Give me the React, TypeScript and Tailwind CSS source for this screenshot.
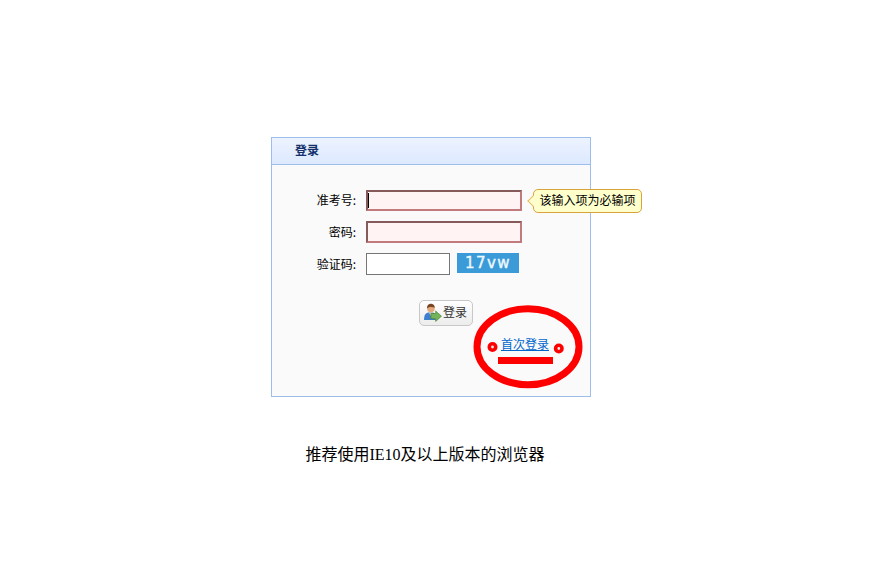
import React from "react";

const inputError =
  "w-[156px] border-2 border-t-[#865a5a] border-l-[#865a5a] border-r-[#c07c7c] border-b-[#c07c7c] bg-[#fff3f3] outline-none";

const LoginIcon = () => (
  <svg width="19" height="19" viewBox="0 0 18 18">
    <path d="M1 16c0-5 1.500-7 5-7h3c2 0 3 2 3 7z" fill="#3f7fd0" />
    <path d="M5.500 9l2 3.500L9.500 9z" fill="#d8c8b0" />
    <circle cx="7.500" cy="5.200" r="3.600" fill="#e3a97c" />
    <path d="M3.800 5c0-3.200 2-4.300 3.800-4.300S11.200 2 11.200 4.500C9 3.500 6 3.500 3.800 5z" fill="#7a4520" />
    <path d="M7.500 10h4.500V7.500l5.500 5-5.500 5V15H7.500z" fill="#74b35a" stroke="#3f7f2a" strokeWidth="0.600" />
  </svg>
);

export default function App() {
  return (
    <div className="min-h-[581px] bg-white pl-[271px] pt-[137px] font-['Noto_Sans_CJK_SC',sans-serif] text-xs text-black">
      <div className="relative h-[260px] w-[320px] border border-[#9dbdeb] bg-[#fafafa]">
        <div className="flex h-[27px] items-center border-b border-[#9dbdeb] bg-gradient-to-b from-[#edf3ff] to-[#dde9ff] pb-[3px] pl-[23px] text-xs font-bold text-[#15316b]">
          登录
        </div>

        <div className="flex flex-col gap-[10px] pt-[25px]">
          <div className="relative flex items-center">
            <label className="w-[84px] pb-[2px] text-right">准考号:</label>
            <input className={`ml-[10px] h-[21px] ${inputError}`} />
            <span className="absolute left-[96px] top-[3px] h-[15px] w-px bg-black" />
          </div>
          <div className="flex items-center">
            <label className="w-[84px] text-right">密码:</label>
            <input type="password" className={`ml-[10px] h-[22px] ${inputError}`} />
          </div>
          <div className="flex items-start">
            <label className="w-[84px] text-right leading-[22px]">验证码:</label>
            <input className="ml-[10px] h-[22px] w-[84px] border border-[#767676] bg-white outline-none" />
            <div className="ml-[7px] flex h-[20px] w-[62px] items-center justify-center bg-[#3a9bd8] pt-[1px] font-['DejaVu_Sans',sans-serif] text-[15px] tracking-[1.500px] text-[#eef8ff] [-webkit-text-stroke:0.4px_#eef8ff]">
              17vw
            </div>
          </div>
        </div>

        <div className="mt-[25px] flex justify-end pr-[117px]">
          <button className="flex h-[26px] w-[54px] items-center gap-[1px] rounded-[5px] border border-[#c8c8c8] bg-gradient-to-b from-white to-[#ececec] pl-[3px] pb-[2px] text-[#333]">
            <LoginIcon />
            登录
          </button>
        </div>

        <div className="mt-[9px] pl-[229px] leading-[18px]">
          <a href="#" className="text-[#0066cc] underline">
            首次登录
          </a>
        </div>

        {/* validation tooltip */}
        <div className="absolute left-[261px] top-[51px] flex h-[24px] w-[109px] items-center justify-center rounded-[5px] border border-[#d9a33c] bg-[#ffffcc] pb-[2px]">
          <span className="absolute left-[-5px] top-[7px] h-[8px] w-[8px] rotate-45 border-b border-l border-[#e5bd6e] bg-[#ffffcc]" />
          <span className="relative">该输入项为必输项</span>
        </div>

        {/* hand-drawn red annotation */}
        <svg className="absolute left-[200px] top-[166px]" width="114" height="88" viewBox="0 0 114 88" fill="none">
          <ellipse cx="56" cy="42.700" rx="51" ry="38" stroke="#ff0000" strokeWidth="7" />
          <circle cx="20.500" cy="43" r="3.200" stroke="#ff0000" strokeWidth="3.600" fill="#ffe8e8" />
          <circle cx="86.800" cy="44.500" r="3.200" stroke="#ff0000" strokeWidth="3.600" fill="#ffe8e8" />
          <rect x="26" y="53" width="55" height="7" fill="#ff0000" />
        </svg>
      </div>

      <p className="mt-[48px] w-[308px] text-center font-['Liberation_Serif','Noto_Sans_CJK_SC',serif] text-base leading-[20px] text-black">
        推荐使用IE10及以上版本的浏览器
      </p>
    </div>
  );
}
